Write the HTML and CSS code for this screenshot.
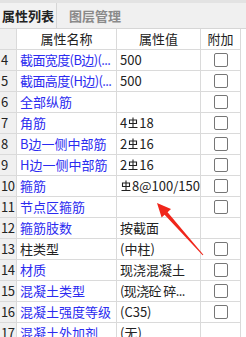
FILE: index.html
```html
<!DOCTYPE html>
<html lang="zh">
<head>
<meta charset="utf-8">
<title>属性列表</title>
<link rel="stylesheet" href="styles.css">
</head>
<body>
<div class="panel">
  <div class="tabs">
    <div class="tab active">属性列表</div>
    <div class="tab">图层管理</div>
  </div>
  <div class="grid">
    <div class="row head">
      <div class="idx"></div>
      <div class="cell center">属性名称</div>
      <div class="cell center">属性值</div>
      <div class="cell center">附加</div>
    </div>
    <div class="row">
      <div class="idx">4</div>
      <div class="cell blue tight">截面宽度(B边)(...</div>
      <div class="cell">500</div>
      <div class="cell box"><span class="chk"></span></div>
    </div>
    <div class="row">
      <div class="idx">5</div>
      <div class="cell blue tight">截面高度(H边)(...</div>
      <div class="cell">500</div>
      <div class="cell box"><span class="chk"></span></div>
    </div>
    <div class="row">
      <div class="idx">6</div>
      <div class="cell blue">全部纵筋</div>
      <div class="cell"></div>
      <div class="cell box"><span class="chk"></span></div>
    </div>
    <div class="row">
      <div class="idx">7</div>
      <div class="cell blue">角筋</div>
      <div class="cell">4<svg class="gang" viewBox="0 0 10 12"><path d="M5 0.5V10.5M1.5 3h7v3.5h-7zM0.5 10.5h9"/></svg>18</div>
      <div class="cell box"><span class="chk"></span></div>
    </div>
    <div class="row">
      <div class="idx">8</div>
      <div class="cell blue">B边一侧中部筋</div>
      <div class="cell">2<svg class="gang" viewBox="0 0 10 12"><path d="M5 0.5V10.5M1.5 3h7v3.5h-7zM0.5 10.5h9"/></svg>16</div>
      <div class="cell box"><span class="chk"></span></div>
    </div>
    <div class="row">
      <div class="idx">9</div>
      <div class="cell blue">H边一侧中部筋</div>
      <div class="cell">2<svg class="gang" viewBox="0 0 10 12"><path d="M5 0.5V10.5M1.5 3h7v3.5h-7zM0.5 10.5h9"/></svg>16</div>
      <div class="cell box"><span class="chk"></span></div>
    </div>
    <div class="row">
      <div class="idx">10</div>
      <div class="cell blue">箍筋</div>
      <div class="cell"><svg class="gang" viewBox="0 0 10 12"><path d="M5 0.5V10.5M1.5 3h7v3.5h-7zM0.5 10.5h9"/></svg>8@100/150</div>
      <div class="cell box"><span class="chk"></span></div>
    </div>
    <div class="row">
      <div class="idx">11</div>
      <div class="cell blue">节点区箍筋</div>
      <div class="cell"></div>
      <div class="cell box"><span class="chk"></span></div>
    </div>
    <div class="row">
      <div class="idx">12</div>
      <div class="cell blue">箍筋肢数</div>
      <div class="cell">按截面</div>
      <div class="cell box"></div>
    </div>
    <div class="row">
      <div class="idx">13</div>
      <div class="cell">柱类型</div>
      <div class="cell">(中柱)</div>
      <div class="cell box"><span class="chk"></span></div>
    </div>
    <div class="row">
      <div class="idx">14</div>
      <div class="cell blue">材质</div>
      <div class="cell">现浇混凝土</div>
      <div class="cell box"><span class="chk"></span></div>
    </div>
    <div class="row">
      <div class="idx">15</div>
      <div class="cell blue">混凝土类型</div>
      <div class="cell tight">(现浇砼 碎...</div>
      <div class="cell box"><span class="chk"></span></div>
    </div>
    <div class="row">
      <div class="idx">16</div>
      <div class="cell blue">混凝土强度等级</div>
      <div class="cell">(C35)</div>
      <div class="cell box"><span class="chk"></span></div>
    </div>
    <div class="row">
      <div class="idx">17</div>
      <div class="cell blue">混凝土外加剂</div>
      <div class="cell">(无)</div>
      <div class="cell box"></div>
    </div>
  </div>
  <svg class="arrow" width="246" height="337" viewBox="0 0 246 337">
    <polygon points="157,203 171,209 167.6,212.3 203.4,254.7 202.6,255.3 164.6,214.8 161.6,217.6"/>
  </svg>
</div>
</body>
</html>
```

FILE: styles.css
```css
body {
	margin: 0;
	background: #fff;
	font-family: "Noto Sans CJK SC", "Microsoft YaHei", sans-serif;
	font-size: 13px;
	color: #222;
}

.panel {
	position: relative;
	width: 246px;
	height: 337px;
	overflow: hidden;
}

.tabs {
	display: flex;
	height: 25px;
	padding-top: 3px;
	background: #f0f0f0;
	border-bottom: 1px solid #d6d6d6;
	box-shadow: inset 0 3px 0 #e3e3e3;
}

.tab {
	padding: 0 4px 0 2px;
	line-height: 25px;
	color: #8a8a8a;
	font-weight: bold;
	margin-left: 10px;
}

.tab.active {
	margin-left: 0;
	color: #222;
	background: #f2f2f2;
	border-right: 1px solid #d6d6d6;
	padding-right: 2px;
}

.grid {
	width: 241px;
}

.row {
	display: grid;
	grid-template-columns: 17px 100px 84px 40px;
	height: 21px;
	box-sizing: border-box;
	border-bottom: 1px solid #dadada;
}

.idx {
	background: #f0f0f0;
	border-right: 1px solid #dadada;
	padding-left: 1px;
	line-height: 20px;
	letter-spacing: -0.5px;
	color: #222;
}

.cell {
	border-right: 1px solid #dadada;
	padding-left: 3px;
	line-height: 20px;
	white-space: nowrap;
	overflow: hidden;
}

.tight {
	letter-spacing: -0.6px;
}

.center {
	text-align: center;
	padding-left: 0;
}

.blue {
	color: #2b2bf0;
}

.box {
	display: flex;
	align-items: center;
	justify-content: center;
	padding-left: 0;
}

.chk {
	width: 12px;
	height: 12px;
	border: 1px solid #767676;
	border-radius: 2px;
	background: #fff;
}

.gang {
	width: 10px;
	height: 12px;
	margin: 0 1px;
	vertical-align: -1px;
	fill: none;
	stroke: #222;
	stroke-width: 1.1;
}

.arrow {
	position: absolute;
	left: 0;
	top: 0;
	fill: #f0261b;
}
```
